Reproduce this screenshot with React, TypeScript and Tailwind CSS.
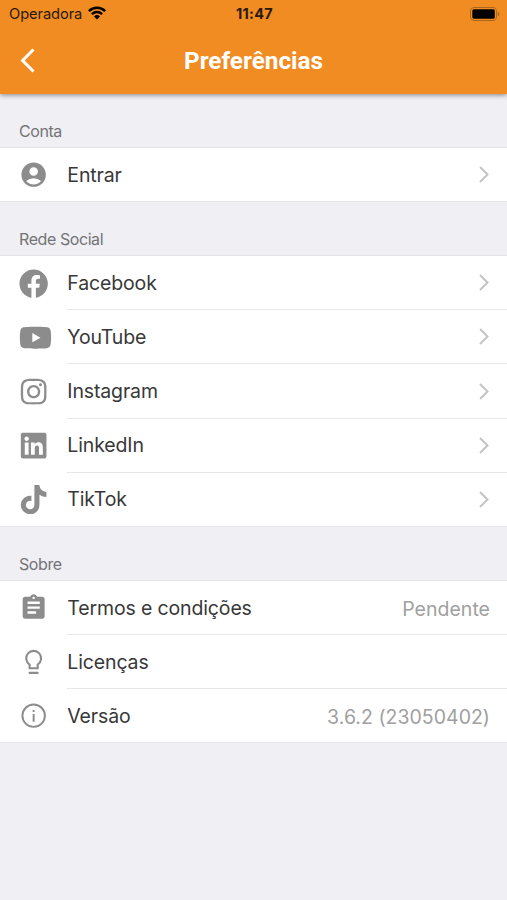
import React from 'react';
import { FaFacebook, FaInstagram, FaLinkedin, FaTiktok, FaYoutube } from 'react-icons/fa';
import { MdAccountCircle, MdAssignment } from 'react-icons/md';

type Item = {
  label: string;
  icon: React.ReactNode;
  value?: string;
  chevron?: boolean;
};

const account: Item[] = [
  { label: 'Entrar', icon: <MdAccountCircle />, chevron: true },
];

const social: Item[] = [
  { label: 'Facebook', icon: <FaFacebook />, chevron: true },
  { label: 'YouTube', icon: <FaYoutube className="ml-[-0.3px] w-[33px]!" />, chevron: true },
  { label: 'Instagram', icon: <FaInstagram />, chevron: true },
  { label: 'LinkedIn', icon: <FaLinkedin />, chevron: true },
  { label: 'TikTok', icon: <FaTiktok />, chevron: true },
];

const about: Item[] = [
  { label: 'Termos e condições', icon: <MdAssignment />, value: 'Pendente' },
  { label: 'Licenças', icon: <BulbIcon /> },
  { label: 'Versão', icon: <InfoIcon />, value: '3.6.2 (23050402)' },
];

function BulbIcon() {
  return (
    <svg viewBox="0 0 24 24" fill="none" stroke="currentColor" strokeWidth="1.7">
      <path d="M8.7 17.4V14.4A6.1 6.1 0 1 1 15.3 14.4V17.4Z" />
      <path d="M8.7 21.2H15.3" strokeLinecap="round" />
    </svg>
  );
}

function InfoIcon() {
  return (
    <svg viewBox="0 0 24 24" fill="none" stroke="currentColor" strokeWidth="1.6">
      <circle cx="12" cy="12" r="9.2" />
      <path d="M12 10.7V16.9M12 7.3V9" />
    </svg>
  );
}

function StatusBar() {
  return (
    <div className="grid h-[28px] grid-cols-3 items-center pl-[9px] pr-[6px] text-[#2b1a08]">
      <div className="flex items-center gap-[6px]">
        <span className="pt-[1px] text-[14.7px] leading-none tracking-[-0.1px]">Operadora</span>
        <svg viewBox="0 0 18 14" className="mb-[2px] h-[14px] w-[18px] text-black" fill="none" stroke="currentColor">
          <path d="M0.9 5.1A11.6 11.6 0 0 1 17.1 5.1" strokeWidth="2.5" />
          <path d="M3.9 8.1A7.3 7.3 0 0 1 14.1 8.1" strokeWidth="2.3" />
          <path d="M9 13.6L6 10.5A4.3 4.3 0 0 1 12 10.5Z" fill="currentColor" stroke="none" />
        </svg>
      </div>
      <span className="-ml-[1px] text-center text-[14.5px] font-bold leading-none tracking-[0.3px]">11:47</span>
      <svg viewBox="0 0 31 14" className="mb-[1px] h-[14px] w-[31px] justify-self-end">
        <rect x="0.5" y="0.5" width="26" height="13" rx="3.5" fill="none" stroke="#a9671d" />
        <rect x="2.3" y="2.3" width="22.5" height="9.4" rx="1.6" fill="#000" />
        <path d="M27.8 4.8v4.4c1-.3 1.7-1.1 1.7-2.2s-.7-1.9-1.7-2.2z" fill="#a9671d" />
      </svg>
    </div>
  );
}

function Header() {
  return (
    <header className="relative h-[94px] bg-[#f08c22] shadow-[0_1px_5px_rgba(0,0,0,0.45)]">
      <StatusBar />
      <div className="grid h-[66px] grid-cols-[60px_1fr_60px] items-center">
        <button className="flex h-full items-center pb-[2px] pl-[20px]" aria-label="Voltar">
          <svg viewBox="0 0 15 25" className="h-[25px] w-[15px]" fill="none" stroke="#fff" strokeWidth="3">
            <path d="M13.5 1.5L2.6 12.5L13.5 23.5" />
          </svg>
        </button>
        <h1 className="pt-[1px] text-center font-[Roboto] text-[24.3px] font-bold leading-none text-white">
          Preferências
        </h1>
      </div>
    </header>
  );
}

function Chevron() {
  return (
    <svg viewBox="0 0 10 17" className="mr-[1px] h-[17px] w-[10px]" fill="none" stroke="#c4c4c6" strokeWidth="2">
      <path d="M1 1l7.5 7.5L1 16" />
    </svg>
  );
}

function Row({ item, last }: { item: Item; last: boolean }) {
  return (
    <div className={`flex h-[54.1px] pl-[19.3px] ${last ? 'border-b border-[#e6e6e9]' : ''}`}>
      <div className="flex w-[48px] shrink-0 items-center text-[29.3px] text-[#8c8c8c]">
        <div className="flex w-[29.3px] shrink-0 items-center [&>svg]:h-[29.3px] [&>svg]:w-[29.3px] [&>svg]:shrink-0">
          {item.icon}
        </div>
      </div>
      <div
        className={`flex flex-1 items-center justify-between pr-[17px] ${
          last ? '' : 'border-b border-[#e8e8ea]'
        }`}
      >
        <span className="pt-[2px] text-[19.5px] leading-none tracking-[-0.14px] text-[#383838]">
          {item.label}
        </span>
        {item.value && (
          <span className="pt-[4px] text-[19.5px] leading-none tracking-[0.02px] text-[#a0a0a0]">
            {item.value}
          </span>
        )}
        {item.chevron && <Chevron />}
      </div>
    </div>
  );
}

function Section({ title, items }: { title: string; items: Item[] }) {
  return (
    <section>
      <h2 className="flex h-[54.1px] items-end pb-[9px] pl-[19px] text-[16px] leading-[16px] tracking-[-0.42px] text-[#747476]">
        {title}
      </h2>
      <div className="bg-white shadow-[0_-1px_0_#e4e4e7]">
        {items.map((item, i) => (
          <Row key={item.label} item={item} last={i === items.length - 1} />
        ))}
      </div>
    </section>
  );
}

export default function App() {
  return (
    <div className="h-[900px] w-[507px] overflow-hidden bg-[#efeff4] font-[Inter,sans-serif]">
      <Header />
      <Section title="Conta" items={account} />
      <Section title="Rede Social" items={social} />
      <Section title="Sobre" items={about} />
    </div>
  );
}
